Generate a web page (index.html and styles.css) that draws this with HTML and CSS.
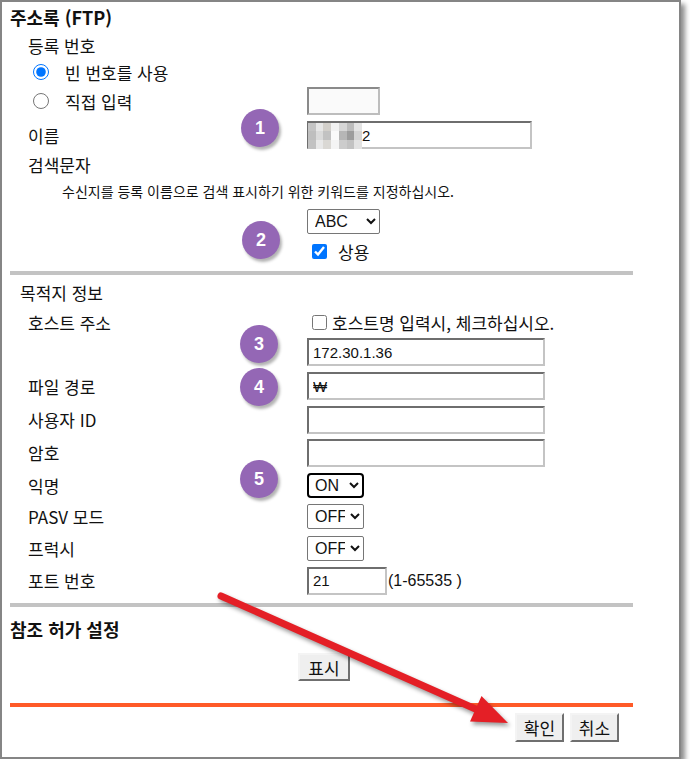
FILE: index.html
```html
<!DOCTYPE html>
<html lang="ko">
<head>
  <meta charset="UTF-8">
  <meta name="viewport" content="width=device-width, initial-scale=1.0">
  <title>주소록 (FTP)</title>
  <link rel="stylesheet" href="styles.css">
</head>
<body>
  <div class="window">
    <div class="form">
      <h2 class="section-title title-top">주소록 (FTP)</h2>

      <div class="row h26"><span class="label">등록 번호</span></div>
      <div class="row h28">
        <label class="label choice"><input type="radio" name="regno" checked>빈 번호를 사용</label>
      </div>
      <div class="row h30">
        <label class="label choice"><input type="radio" name="regno">직접 입력</label>
        <input class="box box-short box-off" type="text">
      </div>
      <div class="row h38">
        <span class="label">이름</span>
        <span class="masked">
          <input class="box box-name" type="text" value="2">
          <span class="mosaic">
            <i style="background:#c4c4c4"></i><i style="background:#e6e6e6"></i><i style="background:#d2cfca"></i><i style="background:#f2f2f2"></i><i style="background:#d6d6d6"></i><i style="background:#bcbcbc"></i><i style="background:#e4e4e4"></i>
            <i style="background:#bebebe"></i><i style="background:#dadada"></i><i style="background:#c2c2c2"></i><i style="background:#fafafa"></i><i style="background:#b6b6b6"></i><i style="background:#9c9c9c"></i><i style="background:#d4d4d4"></i>
            <i style="background:#c2c2c2"></i><i style="background:#e8e8e8"></i><i style="background:#dad8d4"></i><i style="background:#f4f4f4"></i><i style="background:#cccccc"></i><i style="background:#c2c2c2"></i><i style="background:#e2e2e2"></i>
          </span>
        </span>
      </div>
      <div class="row h20"><span class="label">검색문자</span></div>
      <div class="hint h34">수신지를 등록 이름으로 검색 표시하기 위한 키워드를 지정하십시오.</div>
      <div class="row h27">
        <span class="label"></span>
        <select class="pick pick-abc"><option>ABC</option></select>
      </div>
      <div class="row h32">
        <span class="label"></span>
        <label class="check check-wide"><input type="checkbox" checked>상용</label>
      </div>

      <div class="divider"></div>

      <h3 class="sub-title h34">목적지 정보</h3>
      <div class="row h26">
        <span class="label">호스트 주소</span>
        <label class="check"><input type="checkbox">호스트명 입력시, 체크하십시오.</label>
      </div>
      <div class="row h34">
        <span class="label"></span>
        <input class="box box-long" type="text" value="172.30.1.36">
      </div>
      <div class="row h34">
        <span class="label">파일 경로</span>
        <input class="box box-long" type="text" value="₩">
      </div>
      <div class="row h33">
        <span class="label">사용자 ID</span>
        <input class="box box-long" type="text">
      </div>
      <div class="row h33">
        <span class="label">암호</span>
        <input class="box box-long" type="password">
      </div>
      <div class="row h33">
        <span class="label">익명</span>
        <select class="pick pick-onoff is-focus"><option>ON</option><option>OFF</option></select>
      </div>
      <div class="row h28">
        <span class="label">PASV 모드</span>
        <select class="pick pick-onoff"><option>OFF</option><option>ON</option></select>
      </div>
      <div class="row h36">
        <span class="label">프럭시</span>
        <select class="pick pick-onoff"><option>OFF</option><option>ON</option></select>
      </div>
      <div class="row h29">
        <span class="label">포트 번호</span>
        <input class="box box-port" type="text" value="21">
        <span class="range">(1-65535 )</span>
      </div>

      <div class="divider divider-low"></div>

      <h2 class="section-title h44">참조 허가 설정</h2>
      <div class="center-row">
        <button class="btn btn-show">표시</button>
      </div>

      <div class="rule-orange"></div>

      <div class="actions">
        <button class="btn">확인</button>
        <button class="btn">취소</button>
      </div>
    </div>

    <span class="badge b1">1</span>
    <span class="badge b2">2</span>
    <span class="badge b3">3</span>
    <span class="badge b4">4</span>
    <span class="badge b5">5</span>
  </div>

  <svg class="arrow" width="690" height="769" viewBox="0 0 690 769">
    <line x1="221" y1="596" x2="480" y2="711" stroke="#e41f26" stroke-width="7" stroke-linecap="round"/>
    <polygon points="508,723 481.5,696 470,721.5" fill="#e41f26"/>
  </svg>
</body>
</html>
```

FILE: styles.css
```css
body {
  margin: 0;
  font-family: "Noto Sans CJK KR", "Liberation Sans", sans-serif;
  font-size: 17px;
  color: #111;
  background: #fff;
}
.window {
  position: relative;
  box-sizing: border-box;
  width: 681px;
  height: 759px;
  border: 2px solid #858585;
  background: #fff;
  box-shadow: 4px 4px 5px rgba(0, 0, 0, 0.45);
}
.form {
  padding-left: 8px;
  width: 623px;
}
.section-title {
  margin: 0;
  font-size: 18px;
  font-weight: bold;
  display: flex;
  align-items: center;
}
.title-top {
  height: 30px;
}
.sub-title {
  margin: 0;
  padding-left: 10px;
  font-size: 17px;
  font-weight: normal;
  display: flex;
  align-items: center;
}
.row {
  display: flex;
  align-items: center;
  padding-left: 18px;
}
.label {
  width: 279px;
  flex: none;
}
.h20 { height: 20px; }
.h26 { height: 26px; }
.h27 { height: 27px; }
.h28 { height: 28px; }
.h29 { height: 29px; }
.h30 { height: 30px; }
.h32 { height: 32px; }
.h33 { height: 33px; }
.h34 { height: 34px; }
.h36 { height: 36px; }
.h38 { height: 38px; }
.h44 { height: 44px; }

.choice {
  display: flex;
  align-items: center;
}
.choice input {
  width: 16px;
  height: 16px;
  margin: 0 16px 0 5px;
}
.check {
  display: flex;
  align-items: center;
  margin-left: 5px;
  white-space: nowrap;
}
.check input {
  width: 15px;
  height: 15px;
  margin: 0 5px 0 0;
}
.check-wide input {
  margin-right: 11px;
}

.hint {
  display: flex;
  align-items: center;
  padding-left: 52px;
  font-size: 14px;
}

.box {
  box-sizing: border-box;
  height: 28px;
  padding: 0 4px;
  border: 2px solid;
  border-color: #6e6e6e #c4c4c4 #c4c4c4 #6e6e6e;
  font-family: "Liberation Sans", "Noto Sans CJK KR", sans-serif;
  font-size: 15px;
  color: #111;
  background: #fff;
  outline: none;
}
.box-short { width: 73px; }
.box-off {
  background: #fafafa;
  border-color: #8a8a8a #bdbdbd #bdbdbd #8a8a8a;
}
.box-name {
  width: 225px;
  padding-left: 53px;
}
.box-long { width: 238px; }
.box-port { width: 80px; }
.range {
  margin-left: 1px;
  font-family: "Liberation Sans", sans-serif;
  font-size: 16px;
}

.masked {
  position: relative;
  display: block;
}
.mosaic {
  position: absolute;
  left: 1px;
  top: 2px;
  width: 54px;
  height: 26px;
  display: grid;
  grid-template-columns: repeat(7, 1fr);
  grid-template-rows: repeat(3, 1fr);
}

.pick {
  box-sizing: border-box;
  height: 25px;
  padding: 0 2px 0 3px;
  border: 1px solid #767676;
  border-radius: 2px;
  background: #fff;
  font-family: "Liberation Sans", sans-serif;
  font-size: 16px;
  color: #111;
}
.pick-abc { width: 73px; }
.pick-onoff { width: 57px; }
.is-focus {
  border: 2px solid #000;
  border-radius: 4px;
  padding-left: 2px;
}

.divider {
  height: 4px;
  margin-top: 4px;
  background: #c3c3c3;
}
.divider-low {
  margin-top: 8px;
}

.center-row {
  height: 32px;
  display: flex;
  align-items: center;
  justify-content: center;
  padding-left: 5px;
}
.btn {
  box-sizing: border-box;
  height: 28px;
  padding: 0 4px;
  border: 2px solid;
  border-color: #f4f4f4 #6f6f6f #6f6f6f #f4f4f4;
  background: #efefef;
  font-family: "Noto Sans CJK KR", sans-serif;
  font-size: 17px;
  line-height: 1;
  color: #111;
}
.btn-show { width: 52px; }

.rule-orange {
  height: 4px;
  margin-top: 20px;
  background: #ff5a28;
}
.actions {
  display: flex;
  justify-content: flex-end;
  gap: 6px;
  margin-top: 6px;
  padding-right: 14px;
}
.actions .btn {
  width: 49px;
  height: 29px;
}

.badge {
  position: absolute;
  width: 38px;
  height: 38px;
  border-radius: 50%;
  background: #9467b5;
  color: #fff;
  font-family: "Liberation Sans", sans-serif;
  font-size: 18px;
  font-weight: bold;
  display: flex;
  align-items: center;
  justify-content: center;
  box-shadow: 2px 3px 3px rgba(0, 0, 0, 0.3);
}
.b1 { left: 239px; top: 107px; }
.b2 { left: 240px; top: 219px; }
.b3 { left: 238px; top: 323px; }
.b4 { left: 238px; top: 366px; }
.b5 { left: 238px; top: 458px; }

.arrow {
  position: absolute;
  left: 0;
  top: 0;
  pointer-events: none;
  filter: drop-shadow(2px 3px 2px rgba(0, 0, 0, 0.4));
}
```
